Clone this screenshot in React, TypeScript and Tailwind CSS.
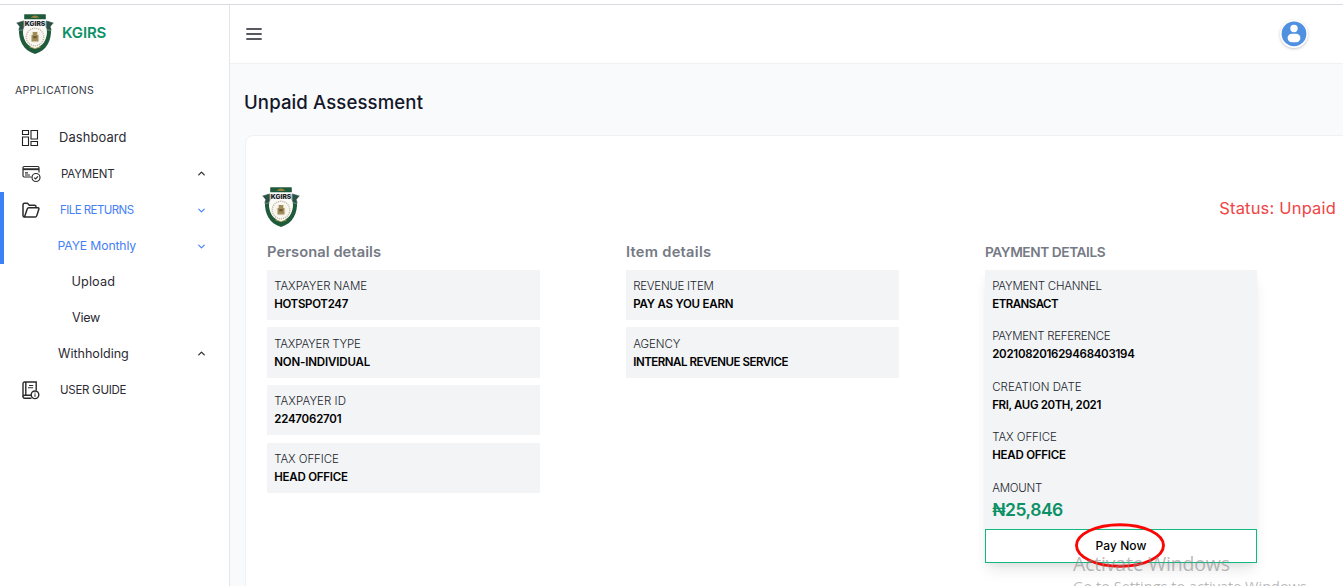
import type { ReactNode } from 'react';
import { ChevronDown, ChevronUp } from 'lucide-react';

function Crest() {
  return (
    <svg width="38" height="41" viewBox="0 0 38 41" className="block shrink-0">
      <path d="M3 15 L5 7 H33 L35 15 C35.600 26 31 36.500 19 40 C7 36.500 2.400 26 3 15 Z" fill="#1f5a3a" />
      <path d="M0.200 8.800 L7.800 6.500 V15.800 L2.300 16.500 L3.400 12.600 Z M37.800 8.800 L30.200 6.500 V15.800 L35.700 16.500 L34.600 12.600 Z" fill="#2c5044" stroke="#dfe7e2" strokeWidth="0.4" />
      <path d="M8.300 6 H29.700 V13 C31.400 16 31.200 19.500 30.400 22.500 C29 29 25 32.500 19 34.500 C13 32.500 9 29 7.600 22.500 C6.800 19.500 6.600 16 8.300 13 Z" fill="#fbfaf6" />
      <rect x="8.200" y="0.300" width="21.600" height="5" rx="0.400" fill="#1f5a3a" />
      <path d="M14.500 3.600 L17 2 L19 1.400 L21 2 L23.500 3.600 L19 4.100 Z" fill="#9b8440" />
      <text x="19" y="12" textAnchor="middle" textLength="20.500" lengthAdjust="spacingAndGlyphs" fontFamily="Inter, sans-serif" fontSize="6.200" fontWeight="900" fill="#1d2530">KGIRS</text>
      <circle cx="19" cy="23" r="8.700" fill="none" stroke="#c3bba8" strokeWidth="1.500" strokeDasharray="1.200 0.900" />
      <circle cx="19" cy="23" r="6.600" fill="#f6f2e7" />
      <path d="M16.700 18 H21.300 V21 H22.500 V27.400 H15.500 V21 H16.700 Z" fill="#a08c58" />
      <path d="M17.300 22 H20.700 V24.300 H17.300 Z" fill="#6d5a35" />
      <path d="M13.500 33 Q19 36 24.500 33" fill="none" stroke="#d9b65c" strokeWidth="0.700" />
    </svg>
  );
}

function DashboardIcon() {
  return (
    <svg width="18" height="18" viewBox="0 0 18 18" fill="none" stroke="#222" strokeWidth="1.1">
      <path d="M1.5 1.5h6v4h-6zM1.5 8h6v8.5h-6zM10 1.5h6.5V10H10zM10 12.5h6.5v4H10z" />
    </svg>
  );
}

function PaymentIcon() {
  return (
    <svg width="19" height="18" viewBox="0 0 19 18" fill="none" stroke="#2b2b2b" strokeWidth="1.2">
      <path d="M9.3 12H2.2A1.2 1.2 0 0 1 1 10.800V2.700A1.2 1.2 0 0 1 2.200 1.500H15.800A1.200 1.200 0 0 1 17 2.700V7.500" />
      <path d="M1 4.200h16" strokeWidth="1.900" />
      <path d="M3 7.900h3M3 10h5" />
      <circle cx="14" cy="12.500" r="4" />
      <path d="M12.200 12.600l1.400 1.300 2.400-2.600" />
    </svg>
  );
}

function FolderIcon() {
  return (
    <svg width="18" height="18" viewBox="0 0 18 18" fill="none" stroke="#2b2b2b" strokeWidth="1.5" strokeLinejoin="round">
      <path d="M2.500 16C1.500 16 1 15.300 1 14.500V4C1 3 1.500 2.300 2.500 2.300H5.500L7.300 4.200H12.500C13.500 4.200 14 4.900 14 5.800V6.800" />
      <path d="M2.500 16L5.200 8C5.500 7.200 6 6.800 6.800 6.800H16C16.800 6.800 17.100 7.400 16.800 8.200L14.800 14.600C14.500 15.500 14 16 13.200 16Z" />
    </svg>
  );
}

function GuideIcon() {
  return (
    <svg width="18" height="19" viewBox="0 0 18 19" fill="none" stroke="#2b2b2b" strokeWidth="1.400">
      <path d="M9.500 17.200H2.500A1.500 1.500 0 0 1 1 15.700V2.700A1.700 1.700 0 0 1 2.700 1H14.200V9.500" />
      <path d="M3.800 1v13.200M1 15.500c0-.8.600-1.300 1.500-1.300h7" />
      <path d="M7 4.500h4.200M6 6.700h5.200" strokeWidth="1.100" />
      <circle cx="13" cy="13.800" r="3.800" />
      <path d="M13 13.200v2.600M13 11.600v.9" strokeWidth="1.100" />
    </svg>
  );
}

function NavRow({ icon, children, pad, open, tone = 'text-[#2b2b33]' }: { icon?: ReactNode; children: ReactNode; pad: string; open?: boolean; tone?: string }) {
  return (
    <div className={`flex h-9 items-center pr-[22px] text-[12.6px] ${tone} ${pad}`}>
      {icon && <span className="flex w-[38px] shrink-0">{icon}</span>}
      <span className="flex-1">{children}</span>
      {open === true && <ChevronDown size={11} strokeWidth={2.500} />}
      {open === false && <ChevronUp size={11} strokeWidth={2.800} className="mb-[1px]" />}
    </div>
  );
}

function Field({ label, value, lt, vt }: { label: string; value: string; lt: string; vt: string }) {
  return (
    <div className="h-[50.4px] p-[7.2px] text-[11.5px] leading-[18px] whitespace-nowrap">
      <p className={`font-light text-[#20242c] ${lt}`}>{label}</p>
      <p className={`font-semibold text-black ${vt}`}>{value}</p>
    </div>
  );
}

const personal = [
  { label: 'TAXPAYER NAME', value: 'HOTSPOT247', lt: 'tracking-[-0.07px]', vt: 'tracking-[-0.31px]' },
  { label: 'TAXPAYER TYPE', value: 'NON-INDIVIDUAL', lt: 'tracking-[-0.21px]', vt: 'tracking-[-0.15px]' },
  { label: 'TAXPAYER ID', value: '2247062701', lt: 'tracking-[0.05px]', vt: 'tracking-[-0.21px]' },
  { label: 'TAX OFFICE', value: 'HEAD OFFICE', lt: 'tracking-[-0.08px]', vt: 'tracking-[-0.23px]' },
];

const items = [
  { label: 'REVENUE ITEM', value: 'PAY AS YOU EARN', lt: 'tracking-[-0.26px]', vt: 'tracking-[-0.21px]' },
  { label: 'AGENCY', value: 'INTERNAL REVENUE SERVICE', lt: 'tracking-[-0.06px]', vt: 'tracking-[-0.47px]' },
];

const payment = [
  { label: 'PAYMENT CHANNEL', value: 'ETRANSACT', lt: 'tracking-[-0.22px]', vt: 'tracking-[-0.5px]' },
  { label: 'PAYMENT REFERENCE', value: '202108201629468403194', lt: 'tracking-[-0.3px]', vt: 'tracking-[-0.27px]' },
  { label: 'CREATION DATE', value: 'FRI, AUG 20TH, 2021', lt: 'tracking-[0.02px]', vt: 'tracking-[-0.38px]' },
  { label: 'TAX OFFICE', value: 'HEAD OFFICE', lt: 'tracking-[-0.08px]', vt: 'tracking-[-0.23px]' },
];

function Heading({ children, className }: { children: ReactNode; className: string }) {
  return <h2 className={`mb-[6.85px] h-[22px] leading-[22px] font-semibold whitespace-nowrap text-[#757a85] ${className}`}>{children}</h2>;
}

export default function App() {
  return (
    <div className="relative flex h-[586px] w-[1343px] flex-col overflow-hidden bg-white pt-1 font-['Inter',sans-serif]">
      <div className="flex min-h-0 flex-1 border-t border-[#d9dae0]">
        <aside className="flex w-[230px] shrink-0 flex-col border-r border-[#e3e5ea]">
          <div className="flex h-[57px] items-center pt-[1px] pl-4">
            <Crest />
            <span className="mb-[2px] ml-[8px] text-[15px] font-semibold tracking-[-0.15px] text-[#0b9166]">KGIRS</span>
          </div>
          <p className="mt-[21px] mb-[20px] pl-[15px] text-[10.6px] leading-4 tracking-[0.24px] text-[#3a3d48]">APPLICATIONS</p>
          <nav className="mt-[1px] flex flex-col">
            <NavRow pad="pl-[21px]" icon={<DashboardIcon />}><span className="text-[12.900px] tracking-[0.120px]">Dashboard</span></NavRow>
            <NavRow pad="pl-[22px]" icon={<PaymentIcon />} open={false}><span className="ml-[1px] text-[11.5px] tracking-[-0.18px]">PAYMENT</span></NavRow>
            <div className="border-l-4 border-[#3b82f6]">
              <NavRow pad="pl-[18px]" icon={<FolderIcon />} open tone="text-[#4580f5]"><span className="text-[11.5px] tracking-[-0.56px]">FILE RETURNS</span></NavRow>
              <NavRow pad="pl-[53.5px]" open tone="text-[#4580f5]"><span className="text-[12.2px] tracking-[-0.12px]">PAYE Monthly</span></NavRow>
            </div>
            <NavRow pad="pl-[71.5px]"><span className="text-[12.700px] tracking-[0.100px]">Upload</span></NavRow>
            <NavRow pad="pl-[72px]"><span className="tracking-[-0.3px]">View</span></NavRow>
            <NavRow pad="pl-[58px]" open={false}><span className="tracking-[-0.02px]">Withholding</span></NavRow>
            <NavRow pad="pl-[22px]" icon={<GuideIcon />}><span className="text-[11.5px] tracking-[-0.28px]">USER GUIDE</span></NavRow>
          </nav>
        </aside>

        <div className="flex min-w-0 flex-1 flex-col bg-[#f8fafc]">
          <header className="flex h-[59px] shrink-0 items-center justify-between border-b border-[#f0f1f3] bg-white pr-[35px] pl-4">
            <svg width="16" height="12" viewBox="0 0 16 12" fill="none" stroke="#20222d" strokeWidth="1.500">
              <path d="M0.300 1h15.400M0.300 6h15.400M0.300 11h15.400" />
            </svg>
            <span className="flex size-7 items-center justify-center rounded-full bg-white shadow-[0_1px_3px_rgba(0,0,0,0.22)]">
              <svg width="26" height="26" viewBox="0 0 26 26">
                <circle cx="13" cy="12.800" r="12.400" fill="#4f90e0" />
                <circle cx="13" cy="7.500" r="3.700" fill="#fff" />
                <rect x="6.600" y="12.800" width="12.800" height="8.400" rx="4.200" fill="#fff" />
              </svg>
            </span>
          </header>

          <h1 className="mt-[25px] mb-[20px] pl-[14px] text-[18.600px] leading-[26px] font-medium tracking-[0.100px] text-[#14172a]">Unpaid Assessment</h1>

          <section className="-mr-3 -mb-4 ml-[15px] flex flex-1 flex-col rounded-lg border border-[#f0f1f3] bg-white pt-[50px] pl-4">
            <div className="flex h-[43px] shrink-0 items-center justify-between pr-[18px]">
              <Crest />
              <span className="text-[16.500px] leading-[24px] tracking-[0.180px] text-[#ef4444]">Status: Unpaid</span>
            </div>
            <div className="mt-[12px] grid grid-cols-[273px_273px_272px] gap-x-[86px] pl-[5px]">
              <div>
                <Heading className="text-[14.700px] tracking-[0.060px]">Personal details</Heading>
                <div className="flex flex-col gap-[7.2px]">
                  {personal.map((f) => <div key={f.label} className="bg-[#f3f4f6]"><Field {...f} /></div>)}
                </div>
              </div>
              <div>
                <Heading className="text-[14.700px] tracking-[0.260px]">Item details</Heading>
                <div className="flex flex-col gap-[7.2px]">
                  {items.map((f) => <div key={f.label} className="bg-[#f3f4f6]"><Field {...f} /></div>)}
                </div>
              </div>
              <div>
                <Heading className="text-[13.700px] tracking-[-0.420px]">PAYMENT DETAILS</Heading>
                <div className="bg-[#f3f4f6] shadow-[0_9px_14px_-3px_rgba(0,0,0,0.1),0_4px_6px_-2px_rgba(0,0,0,0.05)]">
                  {payment.map((f) => <Field key={f.label} {...f} />)}
                  <div className="h-[57.550px] px-[7.200px] pt-[7.200px]">
                    <p className="text-[11.500px] leading-[18px] font-light tracking-[-0.250px] text-[#20242c]">AMOUNT</p>
                    <p className="text-[17.500px] leading-[26px] font-semibold tracking-[-0.480px] text-[#0b9166]">₦25,846</p>
                  </div>
                  <button className="relative flex h-[34px] w-full items-center justify-center border border-[#10b981] bg-white text-[12px] font-medium tracking-[0.080px] text-black">
                    Pay Now
                    <svg className="absolute top-[-7px] left-[88px]" width="92" height="46" viewBox="0 0 92 46" fill="none">
                      <ellipse cx="46" cy="22.500" rx="43.500" ry="20.800" stroke="#fb0505" strokeWidth="2.900" />
                    </svg>
                  </button>
                </div>
              </div>
            </div>
          </section>
        </div>
      </div>

      <div className="pointer-events-none absolute top-[551px] left-[1073px] font-['Open_Sans',sans-serif] whitespace-nowrap text-[#8a8a8a]/60">
        <p className="text-[19.500px] leading-[26px] tracking-[-0.200px]">Activate Windows</p>
        <p className="text-[14.500px] leading-[20px]">Go to Settings to activate Windows.</p>
      </div>
    </div>
  );
}
